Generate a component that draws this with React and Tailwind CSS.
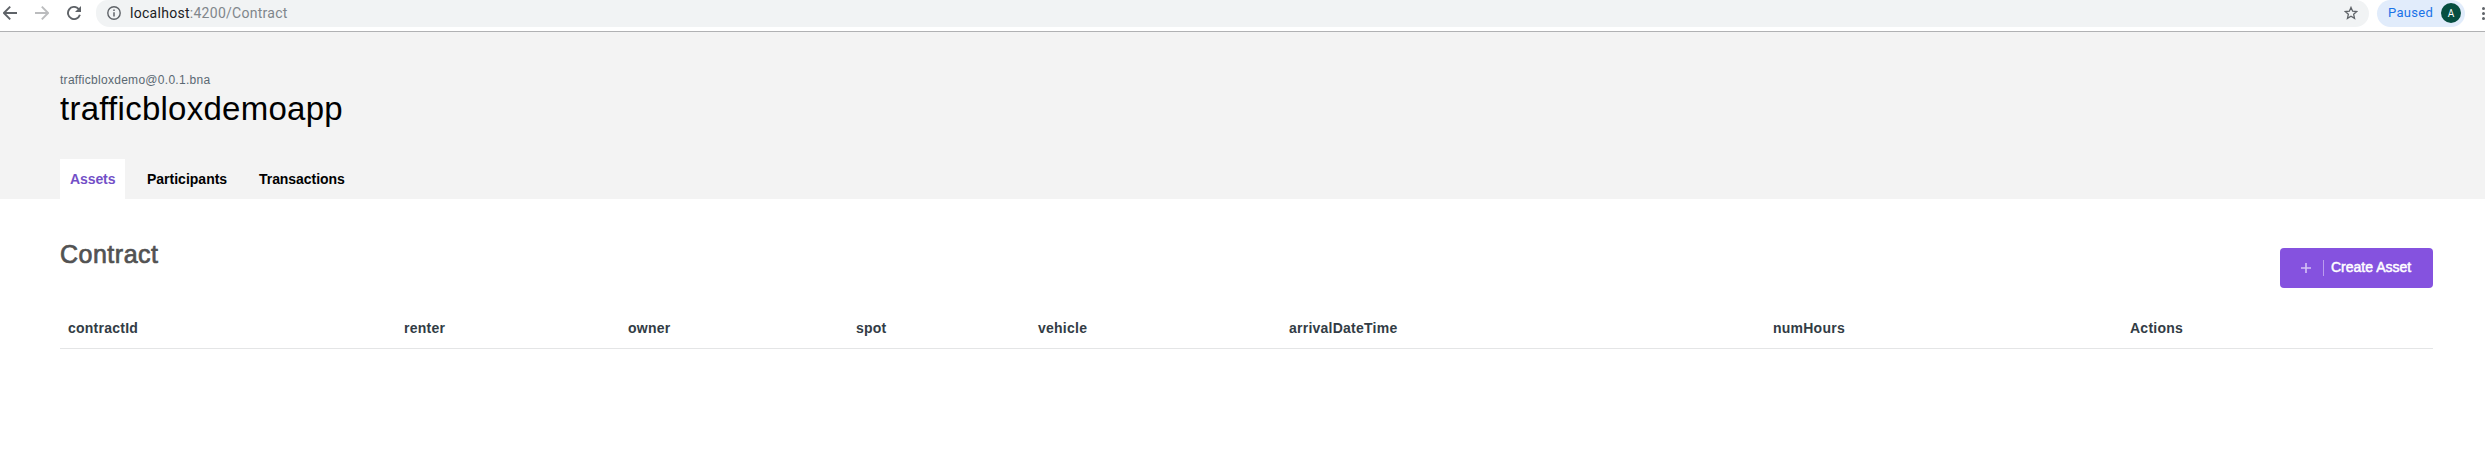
const columns = [
  ['contractId', 'w-[336px]'],
  ['renter', 'w-[224px]'],
  ['owner', 'w-[228px]'],
  ['spot', 'w-[182px]'],
  ['vehicle', 'w-[251px]'],
  ['arrivalDateTime', 'w-[484px]'],
  ['numHours', 'w-[357px]'],
  ['Actions', 'w-[311px]'],
];

function BrowserBar() {
  return (
    <div className="flex h-8 items-start border-b border-[#b0b1b3] bg-white">
      <div className="flex h-[26px] w-24 shrink-0 items-center text-[#5f6368]">
        <svg className="ml-[3px] size-[14px]" viewBox="0 0 14 14" fill="none" stroke="currentColor" strokeWidth="1.9">
          <path d="M14 7H1.3M7.2.7.9 7l6.3 6.3" />
        </svg>
        <svg className="ml-[18px] size-[14px] text-[#bbbcbe]" viewBox="0 0 14 14" fill="none" stroke="currentColor" strokeWidth="1.9">
          <path d="M0 7h12.7M6.8.7 13.1 7l-6.3 6.3" />
        </svg>
        <svg className="ml-[18px] size-[14px]" viewBox="0 0 14 14" fill="none" stroke="currentColor" strokeWidth="1.9">
          <path d="M12.9 8.8A6.1 6.1 0 1 1 11.5 2.8L13 4.3" />
          <path d="M14 0v6H8z" fill="currentColor" stroke="none" />
        </svg>
      </div>
      <div className="flex h-[27px] w-[2273px] shrink-0 items-center rounded-r-[14px] rounded-bl-[14px] rounded-tl-[12px] bg-[#f1f3f4] pb-px pl-[11px] pr-[11px]">
        <svg className="size-[14px] shrink-0 text-[#5f6368]" viewBox="0 0 14 14" fill="none" stroke="currentColor" strokeWidth="1.4">
          <circle cx="7" cy="7" r="6.2" />
          <path d="M7 6.2v4.3M7 3.4v1.5" strokeWidth="1.5" />
        </svg>
        <span className="ml-[9px] flex-1 font-[Roboto,sans-serif] text-[14px] leading-5 tracking-[0.28px] text-[#80868b]">
          <span className="text-[#202124]">localhost</span>:4200/Contract
        </span>
        <svg className="size-[14px] shrink-0 text-[#5f6368]" viewBox="0 0 14 14" fill="none" stroke="currentColor" strokeWidth="1.3">
          <path d="m7 1.4 1.65 3.8 4.1.4-3.1 2.7.9 4L7 10.2l-3.55 2.1.9-4-3.1-2.7 4.1-.4z" />
        </svg>
      </div>
      <div className="ml-2 flex h-[27px] w-[88px] shrink-0 items-center justify-between rounded-[14px] bg-[#e1ecfb] pb-px pl-[11px] pr-1">
        <span className="font-[Roboto,sans-serif] text-[13px] tracking-[0.3px] text-[#1a73e8]">Paused</span>
        <span className="flex size-5 items-center justify-center rounded-full bg-[#064e40] font-[Roboto,sans-serif] text-[10px] text-white">A</span>
      </div>
      <div className="ml-[17px] flex h-[27px] flex-col items-center justify-center gap-[2px]">
        <i className="size-[3px] rounded-full bg-[#5f6368]" />
        <i className="size-[3px] rounded-full bg-[#5f6368]" />
        <i className="size-[3px] rounded-full bg-[#5f6368]" />
      </div>
    </div>
  );
}

export default function App() {
  return (
    <div className="h-[472px] w-[2485px] overflow-hidden bg-white font-['Liberation_Sans',Arial,sans-serif]">
      <BrowserBar />
      <header className="flex h-[167px] flex-col bg-[#f3f3f3] px-[60px] pt-10">
        <p className="text-[12px] leading-4 tracking-[0.28px] text-[#5a6872]">trafficbloxdemo@0.0.1.bna</p>
        <h1 className="mt-[1px] text-[33px] leading-10 tracking-[0.26px] text-black">trafficbloxdemoapp</h1>
        <nav className="mt-auto flex h-10 items-center text-[14px] font-bold text-black">
          <a className="flex h-10 w-[65px] items-center bg-white pl-[10px] tracking-[-0.1px] text-[#734fc7]">Assets</a>
          <a className="ml-[22px] w-[112px]">Participants</a>
          <a className="tracking-[-0.05px]">Transactions</a>
        </nav>
      </header>
      <main className="px-[60px]">
        <div className="flex h-[105px] w-[2373px] items-start justify-between">
          <h2 className="mt-[41px] text-[25px] leading-7 tracking-[0.5px] text-[#525252] [-webkit-text-stroke:0.7px_#525252]">Contract</h2>
          <button className="mt-[49px] flex h-10 w-[153px] items-center rounded-[4px] bg-[#8552df] pl-[21px] text-white">
            <svg className="size-[10px] text-[#d5c2f5]" viewBox="0 0 10 10" stroke="currentColor" strokeWidth="1.6">
              <path d="M5 0v10M0 5h10" />
            </svg>
            <span className="ml-3 h-4 w-px bg-[#bb9cee]" />
            <span className="ml-[7px] pb-[2px] text-[14px] leading-4 [-webkit-text-stroke:0.5px_white]">Create Asset</span>
          </button>
        </div>
        <table className="w-[2373px] table-fixed border-collapse">
          <thead>
            <tr className="border-b border-[#e4e5e6]">
              {columns.map(([name, width]) => (
                <th key={name} className={`${width} h-[44px] px-2 pb-0 pt-[4px] text-left text-[14px] font-bold leading-5 tracking-[0.24px] text-[#323c45]`}>
                  {name}
                </th>
              ))}
            </tr>
          </thead>
        </table>
      </main>
    </div>
  );
}
